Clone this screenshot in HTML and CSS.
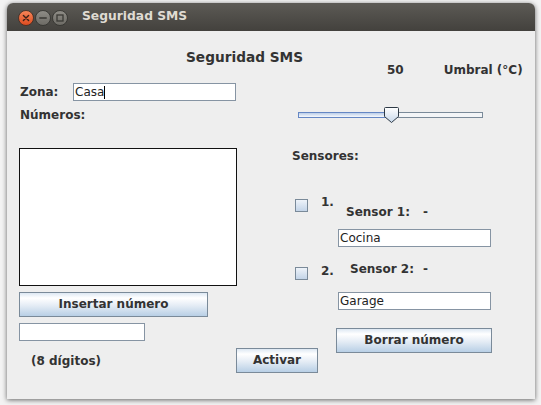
FILE: index.html
```html
<!DOCTYPE html>
<html lang="es">
<head>
<meta charset="utf-8">
<title>Seguridad SMS</title>
<link rel="stylesheet" href="styles.css">
</head>
<body>
<div class="window">
  <div class="titlebar">
    <svg class="wbtn" width="16" height="16" viewBox="0 0 16 16">
      <defs>
        <linearGradient id="gClose" x1="0" y1="0" x2="0" y2="1">
          <stop offset="0" stop-color="#f7875a"/>
          <stop offset="1" stop-color="#dc4a1f"/>
        </linearGradient>
        <linearGradient id="gGray" x1="0" y1="0" x2="0" y2="1">
          <stop offset="0" stop-color="#8f8d87"/>
          <stop offset="1" stop-color="#6c6a64"/>
        </linearGradient>
      </defs>
      <circle cx="8" cy="8" r="7.5" fill="url(#gClose)" stroke="#3a2a22" stroke-width="0.8"/>
      <path d="M5.4 5.4 L10.6 10.6 M10.6 5.4 L5.4 10.6" stroke="#3b2118" stroke-width="1.4" stroke-linecap="round"/>
    </svg>
    <svg class="wbtn" width="16" height="16" viewBox="0 0 16 16">
      <circle cx="8" cy="8" r="7.5" fill="url(#gGray)" stroke="#2f2e2b" stroke-width="0.8"/>
      <path d="M4.8 8 H11.2" stroke="#3a3935" stroke-width="1.5" stroke-linecap="round"/>
    </svg>
    <svg class="wbtn" width="16" height="16" viewBox="0 0 16 16">
      <circle cx="8" cy="8" r="7.5" fill="url(#gGray)" stroke="#2f2e2b" stroke-width="0.8"/>
      <rect x="5" y="5" width="6" height="6" fill="none" stroke="#3a3935" stroke-width="1.3"/>
    </svg>
    <span class="wtitle">Seguridad SMS</span>
  </div>
  <div class="content">
    <div class="heading">Seguridad SMS</div>
    <div class="main">
      <div class="left">
        <div class="zona-row">
          <span class="lbl zona-lbl">Zona:</span>
          <div class="field zona-field">Casa<span class="caret"></span></div>
        </div>
        <div class="lbl numeros">Números:</div>
        <div class="textarea"></div>
        <button class="btn insertar">Insertar número</button>
        <div class="field small-field"></div>
        <div class="bottom-row">
          <span class="lbl digitos">(8 dígitos)</span>
          <button class="btn activar">Activar</button>
        </div>
      </div>
      <div class="right">
        <div class="umbral-row">
          <span class="lbl val">50</span>
          <span class="lbl umbral">Umbral (°C)</span>
        </div>
        <svg class="slider" width="186" height="17" viewBox="0 0 186 17">
          <defs>
            <linearGradient id="gFill" x1="0" y1="0" x2="0" y2="1">
              <stop offset="0" stop-color="#b3c8e6"/>
              <stop offset="1" stop-color="#ffffff"/>
            </linearGradient>
            <linearGradient id="gThumb" x1="0" y1="0" x2="0" y2="1">
              <stop offset="0" stop-color="#ffffff"/>
              <stop offset="1" stop-color="#c6d7ea"/>
            </linearGradient>
          </defs>
          <rect x="0.5" y="5.5" width="184" height="5" fill="#f3f5f7" stroke="#7a8a99"/>
          <rect x="0.5" y="5.5" width="92" height="5" fill="url(#gFill)" stroke="#6587c4"/>
          <path d="M86.5 1.5 Q86.5 0.5 87.5 0.5 H99.5 Q100.5 0.5 100.5 1.5 V9.5 L93.5 15.5 L86.5 9.5 Z" fill="url(#gThumb)" stroke="#2e3a46"/>
        </svg>
        <div class="lbl sensores">Sensores:</div>
        <div class="sensor-row s1">
          <span class="check"></span>
          <span class="lbl num n1">1.</span>
          <span class="lbl sname sn1">Sensor 1:</span>
          <span class="lbl dash">-</span>
        </div>
        <div class="field sfield f1">Cocina</div>
        <div class="sensor-row s2">
          <span class="check"></span>
          <span class="lbl num n2">2.</span>
          <span class="lbl sname sn2">Sensor 2:</span>
          <span class="lbl dash">-</span>
        </div>
        <div class="field sfield f2">Garage</div>
        <button class="btn borrar">Borrar número</button>
      </div>
    </div>
  </div>
</div>
</body>
</html>
```
FILE: styles.css
```css
* {
  box-sizing: border-box;
}

html,
body {
  margin: 0;
  padding: 0;
}

body {
  width: 541px;
  height: 405px;
  overflow: hidden;
  background: #f3f3f3;
  font-family: "DejaVu Sans", "Liberation Sans", sans-serif;
}

.window {
  margin: 3px 0 0 7px;
  width: 528px;
  height: 396px;
  background: #eeeeee;
  border-radius: 6px 6px 0 0;
  box-shadow: 0 1px 5px rgba(0, 0, 0, 0.6);
  display: flex;
  flex-direction: column;
}

.titlebar {
  flex: none;
  height: 28px;
  background: linear-gradient(#5c5a55, #43413d);
  border-radius: 6px 6px 0 0;
  display: flex;
  align-items: flex-start;
  padding: 7px 0 0 11px;
}

.wbtn {
  display: block;
  flex: none;
  margin-right: 1px;
}

.wtitle {
  margin: -2px 0 0 13px;
  line-height: 16px;
  font-size: 12.3px;
  font-weight: bold;
  color: #dfdbd2;
}

.content {
  flex: 1;
  padding: 19px 12px 0 12px;
}

.heading {
  margin-left: 167px;
  font-size: 13.7px;
  line-height: 14px;
  font-weight: bold;
  color: #333333;
}

.main {
  display: flex;
}

.lbl {
  font-size: 12px;
  font-weight: bold;
  color: #333333;
  line-height: 16px;
}

.left {
  flex: none;
  width: 272px;
  display: flex;
  flex-direction: column;
  align-items: flex-start;
}

.right {
  flex: none;
  display: flex;
  flex-direction: column;
  align-items: flex-start;
}

.field {
  height: 18px;
  background: #ffffff;
  border: 1px solid #8694a3;
  padding-left: 1px;
  font-size: 12px;
  line-height: 16px;
  color: #222222;
}

.caret {
  display: inline-block;
  vertical-align: top;
  width: 1px;
  height: 13px;
  margin-top: 2px;
  background: #000000;
}

.btn {
  display: block;
  padding: 0;
  margin: 0;
  height: 25px;
  border: 1px solid #7a8a99;
  background: linear-gradient(#dde8f3 0%, #ffffff 22%, #e4ecf5 55%, #b8cfe5 100%);
  font-family: "DejaVu Sans", "Liberation Sans", sans-serif;
  font-size: 12px;
  font-weight: bold;
  color: #333333;
  line-height: 23px;
  text-align: center;
}

/* left column */
.zona-row {
  margin-top: 19px;
  display: flex;
  align-items: center;
}

.zona-lbl {
  width: 54px;
  padding-left: 1px;
}

.zona-field {
  width: 163px;
}

.numeros {
  margin-top: 7px;
  line-height: 15px;
  padding-left: 1px;
}

.textarea {
  margin-top: 25px;
  width: 218px;
  height: 138px;
  background: #ffffff;
  border: 1px solid #111111;
}

.insertar {
  margin-top: 6px;
  width: 189px;
}

.small-field {
  margin-top: 6px;
  width: 126px;
}

.bottom-row {
  margin-top: 7px;
  display: flex;
  align-items: center;
}

.digitos {
  flex: none;
  width: 205px;
  margin-left: 12px;
}

.activar {
  flex: none;
  width: 82px;
}

/* right column */
.umbral-row {
  display: flex;
  line-height: 12px;
}

.umbral-row .lbl {
  line-height: 12px;
}

.val {
  margin-left: 96px;
}

.umbral {
  margin-left: 40px;
}

.slider {
  display: block;
  margin: 31px 0 0 7px;
}

.sensores {
  margin-top: 24px;
  padding-left: 1px;
}

.sensor-row {
  display: flex;
  align-items: flex-start;
}

.s1 {
  margin-top: 30px;
}

.s2 {
  margin-top: 14px;
}

.check {
  flex: none;
  width: 13px;
  height: 13px;
  margin-left: 4px;
  border: 1px solid #7a8a99;
  background: linear-gradient(#eef3f9, #c3d4e8);
}

.s1 .check {
  margin-top: 5px;
}

.s2 .check {
  margin-top: 6px;
}

.num {
  flex: none;
  margin-left: 13px;
}

.n1 {
  width: 25px;
}

.n2 {
  width: 29px;
  margin-top: 2px;
}

.sname {
  flex: none;
}

.sn1 {
  width: 77px;
  margin-top: 10px;
}

.sn2 {
  width: 73px;
}

.s1 .dash {
  margin-top: 10px;
}

.sfield {
  margin-left: 47px;
  width: 153px;
}

.f1 {
  margin-top: 9px;
}

.f2 {
  margin-top: 12px;
}

.borrar {
  margin: 18px 0 0 45px;
  width: 156px;
}
```
